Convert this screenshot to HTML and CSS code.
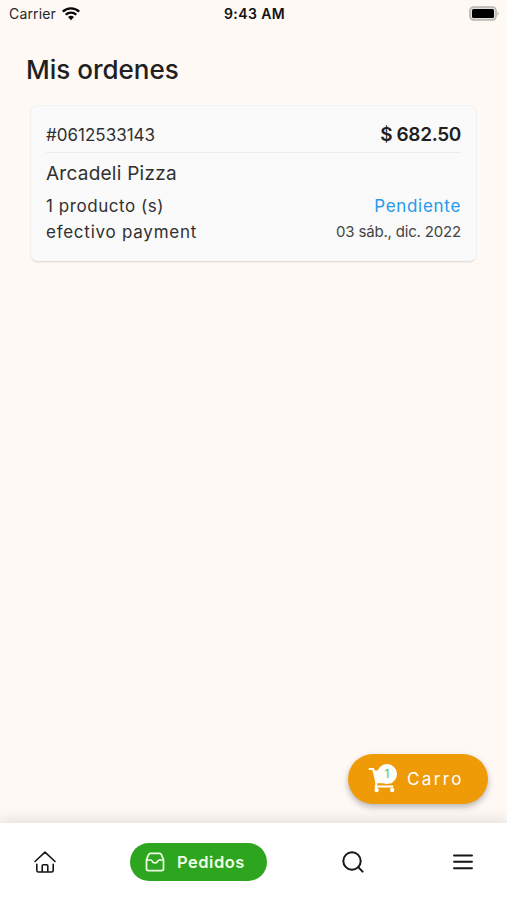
FILE: index.html
```html
<!DOCTYPE html>
<html lang="es">
<head>
<meta charset="utf-8">
<title>Mis ordenes</title>
<link rel="stylesheet" href="styles.css">
</head>
<body>
<div class="app">
  <header class="status">
    <div class="carrier"><span>Carrier</span>
      <svg width="18" height="14" viewBox="0 0 18 14" fill="none" stroke="#080808" stroke-width="2.3"><path d="M.8 4.7a11.8 11.8 0 0 1 16.4 0M3.7 7.8a7.6 7.6 0 0 1 10.6 0"/><path d="M6 10.1a4.3 4.3 0 0 1 6 0L9 13.2z" fill="#080808" stroke="none"/></svg>
    </div>
    <time class="clock">9:43 AM</time>
    <svg class="battery" width="31" height="15" viewBox="0 0 31 15"><rect x=".9" y=".9" width="26.2" height="13.2" rx="4" fill="#e2dfda" stroke="#b5b3ae" stroke-width="1.5"/><rect x="3" y="3" width="22" height="9" rx="1.5" fill="#000"/><path d="M28.6 5.2q2 2.3 0 4.6z" fill="#aaa9a5"/></svg>
  </header>
  <main>
    <h1><span class="t-title">Mis ordenes</span></h1>
    <article class="card">
      <div class="row head"><span class="t-id">#0612533143</span><strong class="t-price">$ 682.50</strong></div>
      <h2><span class="t-shop">Arcadeli Pizza</span></h2>
      <div class="row"><span class="t-count">1 producto (s)</span><span class="t-state">Pendiente</span></div>
      <div class="row"><span class="t-pay">efectivo payment</span><span class="t-date">03 sáb., dic. 2022</span></div>
    </article>
  </main>
  <div class="action">
    <button class="cart">
      <span class="cart-icon">
        <svg width="30" height="30" viewBox="0 0 30 30" fill="none" stroke="#fff" stroke-width="2" stroke-linecap="round" stroke-linejoin="round"><path d="M1.5 5h3.7l3 13v7.5M7.5 22.6h17M8.5 18.2h15"/><path d="M6 6.5h18v12H8.7z" fill="#fff" stroke="none"/><circle cx="8.6" cy="26" r="1.2" fill="#fff"/><circle cx="24.2" cy="26" r="1.2" fill="#fff"/></svg>
        <span class="badge">1</span>
      </span>
      <span class="t-cart">Carro</span>
    </button>
  </div>
  <nav class="nav">
    <a class="home"><svg width="22" height="22" viewBox="0 0 22 22" fill="none" stroke="#161616" stroke-width="1.6" stroke-linecap="round" stroke-linejoin="round"><path d="M1 10.5 11 1.2l10 9.3M2.8 13.2v6.2q0 1.6 1.6 1.6h13.2q1.6 0 1.6-1.6v-6.2M8.2 21v-6.1q0-1.2 1.2-1.2h3.2q1.2 0 1.2 1.2V21"/></svg></a>
    <a class="active"><svg width="20" height="20" viewBox="0 0 20 20" fill="none" stroke="#efffe9" stroke-width="1.7" stroke-linecap="round" stroke-linejoin="round"><path d="M1.5 7.5 3.6 2.6q.5-1.2 1.8-1.2h9.2q1.3 0 1.8 1.2l2.1 4.9v9.3q0 1.8-1.8 1.8H3.3q-1.8 0-1.8-1.8zM1.5 8h4.2q1 0 1.4 1 .8 2 2.9 2t2.9-2q.4-1 1.4-1h4.2"/></svg><span class="t-nav">Pedidos</span></a>
    <a class="search"><svg width="22" height="22" viewBox="0 0 22 22" fill="none" stroke="#161616" stroke-width="2" stroke-linecap="round"><circle cx="10" cy="10" r="8.7"/><path d="m16.4 16.4 4.2 4.2"/></svg></a>
    <a class="menu"><svg width="20" height="16" viewBox="0 0 20 16" fill="none" stroke="#161616" stroke-width="1.9" stroke-linecap="round"><path d="M1 1.5h18M1 7.8h18M1 14.2h18"/></svg></a>
  </nav>
</div>
</body>
</html>
```
FILE: styles.css
```css
* { box-sizing: border-box; }
body { margin: 0; font-family: Inter, "Noto Sans", sans-serif; color: #303030; }
span, strong, time { white-space: nowrap; }
svg { display: block; flex: none; }
.app { width: 507px; height: 900px; display: flex; flex-direction: column; background: #fef9f5; overflow: hidden; }
.status { height: 28px; display: grid; grid-template-columns: 1fr auto 1fr; align-items: center; padding: 0 7px 1px 9px; color: #252525; }
.carrier { display: flex; align-items: center; gap: 6px; font-size: 14px; letter-spacing: .15px; }
.clock { font-size: 14px; font-weight: 600; color: #111; letter-spacing: .4px; }
.battery { justify-self: end; }
main { flex: 1; padding: 23px 30px 0; }
h1 { margin: 0 0 16px -4px; font-size: 26px; line-height: 38px; font-weight: 500; color: #202020; }
.card { height: 157px; padding: 14px 15px 0; border: 1px solid #f1f1ef; border-bottom-color: #e1e2e1; border-radius: 8px; background: #fafafa; box-shadow: 0 1px 1px rgba(0,0,0,.05); }
.row { height: 26px; display: flex; justify-content: space-between; align-items: center; font-size: 17px; line-height: 26px; }
.head { height: 33px; padding-bottom: 3px; border-bottom: 1px solid #ececec; }
h2 { margin: 7px 0 5px; font-size: 19px; line-height: 28px; font-weight: 400; letter-spacing: .25px; }
.t-price { font-size: 19px; font-weight: 600; letter-spacing: -.35px; color: #202020; }
.t-count { letter-spacing: .55px; }
.t-pay { letter-spacing: .75px; }
.t-state { color: #2499ed; letter-spacing: .7px; }
.t-date { font-size: 15px; letter-spacing: -.18px; color: #444; }
.action { height: 69px; display: flex; justify-content: flex-end; padding-right: 19px; }
.cart { width: 140px; height: 50px; border: 0; border-radius: 25px; padding: 0 0 0 20px; display: flex; align-items: center; gap: 9px; background: #ef9b08; color: #fff; font: 400 17px Inter, sans-serif; letter-spacing: 2.4px; box-shadow: 0 3px 6px rgba(0,0,0,.28); }
.cart-icon { position: relative; }
.badge { position: absolute; left: 9px; top: 0; width: 20px; height: 20px; border-radius: 50%; background: #fff; color: #58c443; font-size: 12px; letter-spacing: 0; line-height: 20px; text-align: center; }
.nav { height: 77px; flex: none; display: flex; align-items: center; padding-left: 34px; background: #fff; box-shadow: 0 -2px 14px rgba(70,50,40,.15); }
.active { width: 137px; height: 38px; margin-left: 74px; padding-left: 15px; display: flex; align-items: center; gap: 12px; border-radius: 19px; background: #2ea51e; color: #efffe9; font-size: 16.5px; font-weight: 600; letter-spacing: .5px; }
.search { margin-left: 75px; }
.menu { margin-left: 89px; }
```
